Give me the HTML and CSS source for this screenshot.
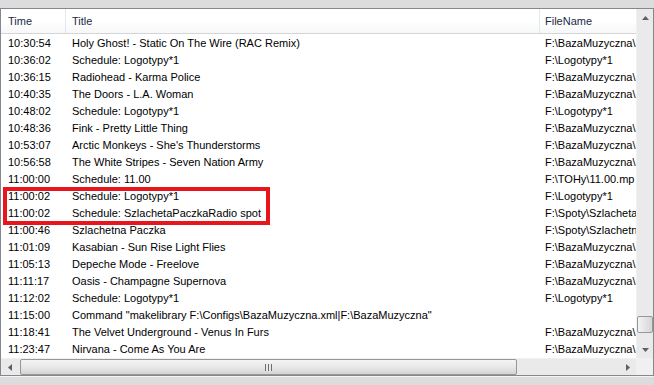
FILE: index.html
```html
<!DOCTYPE html>
<html lang="en">

<head>
    <meta charset="UTF-8">
    <title>Log</title>
    <link rel="stylesheet" href="styles.css">
</head>

<body>

    <div class="window">
        <div class="list">
            <div class="row head">
                <div class="cell">Time</div>
                <div class="cell">Title</div>
                <div class="cell">FileName</div>
            </div>

            <div class="row"><div class="cell">10:30:54</div><div class="cell">Holy Ghost! - Static On The Wire (RAC Remix)</div><div class="cell">F:\BazaMuzyczna\</div></div>
            <div class="row"><div class="cell">10:36:02</div><div class="cell">Schedule: Logotypy*1</div><div class="cell">F:\Logotypy*1</div></div>
            <div class="row"><div class="cell">10:36:15</div><div class="cell">Radiohead - Karma Police</div><div class="cell">F:\BazaMuzyczna\</div></div>
            <div class="row"><div class="cell">10:40:35</div><div class="cell">The Doors - L.A. Woman</div><div class="cell">F:\BazaMuzyczna\</div></div>
            <div class="row"><div class="cell">10:48:02</div><div class="cell">Schedule: Logotypy*1</div><div class="cell">F:\Logotypy*1</div></div>
            <div class="row"><div class="cell">10:48:36</div><div class="cell">Fink - Pretty Little Thing</div><div class="cell">F:\BazaMuzyczna\</div></div>
            <div class="row"><div class="cell">10:53:07</div><div class="cell">Arctic Monkeys - She's Thunderstorms</div><div class="cell">F:\BazaMuzyczna\</div></div>
            <div class="row"><div class="cell">10:56:58</div><div class="cell">The White Stripes - Seven Nation Army</div><div class="cell">F:\BazaMuzyczna\</div></div>
            <div class="row"><div class="cell">11:00:00</div><div class="cell">Schedule: 11.00</div><div class="cell">F:\TOHy\11.00.mp</div></div>
            <div class="row"><div class="cell">11:00:02</div><div class="cell">Schedule: Logotypy*1</div><div class="cell">F:\Logotypy*1</div></div>
            <div class="row"><div class="cell">11:00:02</div><div class="cell">Schedule: SzlachetaPaczkaRadio spot</div><div class="cell">F:\Spoty\Szlacheta</div></div>
            <div class="row"><div class="cell">11:00:46</div><div class="cell">Szlachetna Paczka</div><div class="cell">F:\Spoty\Szlachetna</div></div>
            <div class="row"><div class="cell">11:01:09</div><div class="cell">Kasabian - Sun Rise Light Flies</div><div class="cell">F:\BazaMuzyczna\</div></div>
            <div class="row"><div class="cell">11:05:13</div><div class="cell">Depeche Mode - Freelove</div><div class="cell">F:\BazaMuzyczna\</div></div>
            <div class="row"><div class="cell">11:11:17</div><div class="cell">Oasis - Champagne Supernova</div><div class="cell">F:\BazaMuzyczna\</div></div>
            <div class="row"><div class="cell">11:12:02</div><div class="cell">Schedule: Logotypy*1</div><div class="cell">F:\Logotypy*1</div></div>
            <div class="row"><div class="cell">11:15:00</div><div class="cell">Command "makelibrary F:\Configs\BazaMuzyczna.xml|F:\BazaMuzyczna"</div><div class="cell"></div></div>
            <div class="row"><div class="cell">11:18:41</div><div class="cell">The Velvet Underground - Venus In Furs</div><div class="cell">F:\BazaMuzyczna\</div></div>
            <div class="row"><div class="cell">11:23:47</div><div class="cell">Nirvana - Come As You Are</div><div class="cell">F:\BazaMuzyczna\</div></div>

            <!-- zaznaczenie -->
            <div class="mark"></div>
        </div>

        <div class="vscroll">
            <div class="arrow">
                <svg width="7" height="4" viewBox="0 0 7 4"><path d="M3.5 0 L7 4 L0 4 Z" fill="#5f5f5f"/></svg>
            </div>
            <div class="track vtrack">
                <div class="thumb vthumb"></div>
            </div>
            <div class="arrow">
                <svg width="7" height="4" viewBox="0 0 7 4"><path d="M0 0 L7 0 L3.5 4 Z" fill="#5f5f5f"/></svg>
            </div>
        </div>

        <div class="hscroll">
            <div class="arrow">
                <svg width="4" height="7" viewBox="0 0 4 7"><path d="M4 0 L4 7 L0 3.5 Z" fill="#5f5f5f"/></svg>
            </div>
            <div class="track htrack">
                <div class="thumb hthumb"><span class="grip"></span></div>
            </div>
            <div class="arrow">
                <svg width="4" height="7" viewBox="0 0 4 7"><path d="M0 0 L4 3.5 L0 7 Z" fill="#5f5f5f"/></svg>
            </div>
        </div>

        <div class="corner"></div>
    </div>

    <div class="status"></div>

</body>

</html>
```

FILE: styles.css
```css
* {
    margin: 0;
    padding: 0;
    box-sizing: border-box;
}

body {
    width: 654px;
    height: 385px;
    overflow: hidden;
    background: #dcdcdc;
    font-family: Tahoma, "Liberation Sans", sans-serif;
    font-size: 11px;
    color: #000;
    padding-top: 8px;
}

.window {
    height: 368px;
    border: 1px solid #828790;
    background: #fff;
    display: grid;
    grid-template-columns: 1fr 17px;
    grid-template-rows: 1fr 17px;
}

.list {
    position: relative;
    overflow: hidden;
}

.row {
    display: grid;
    grid-template-columns: 65px 474px 200px;
    height: 17px;
    align-items: center;
    white-space: nowrap;
}

.cell {
    overflow: hidden;
    padding-left: 6px;
}

.cell:first-child {
    padding-left: 7px;
}

.cell:last-child {
    padding-left: 5px;
}

.head {
    height: 25px;
    background: linear-gradient(#ffffff, #ffffff 50%, #f6f7f8);
    border-bottom: 1px solid #d5d5d5;
    color: #1b2a44;
}

.head .cell {
    height: 24px;
    line-height: 24px;
    border-right: 1px solid #e3e8ee;
}

.mark {
    position: absolute;
    left: 2px;
    top: 178px;
    width: 267px;
    height: 38px;
    border: 4px solid #e8151d;
}

/* paski przewijania */
.vscroll,
.hscroll {
    display: flex;
    background: #eaeaea;
}

.vscroll {
    flex-direction: column;
    border-left: 1px solid #f0f0f0;
}

.hscroll {
    border-top: 1px solid #f0f0f0;
}

.arrow {
    width: 17px;
    height: 17px;
    display: flex;
    justify-content: center;
    align-items: center;
    flex-shrink: 0;
}

.track {
    flex: 1;
    display: flex;
}

.vtrack {
    flex-direction: column;
    justify-content: flex-end;
}

.thumb {
    border: 1px solid #979797;
    border-radius: 2px;
    background: linear-gradient(90deg, #f4f4f4, #e4e4e4 50%, #d6d6d6);
}

.vthumb {
    height: 17px;
    margin-bottom: 8px;
}

.hthumb {
    width: 497px;
    margin-left: 2px;
    background: linear-gradient(#f4f4f4, #e8e8e8 50%, #d4d4d4);
    display: flex;
    justify-content: center;
    align-items: center;
}

.grip {
    width: 7px;
    height: 7px;
    background: repeating-linear-gradient(90deg, #6f6f6f 0 1px, #e8e8e8 1px 3px);
}

.corner {
    background: #f0f0f0;
}

.status {
    height: 9px;
    border-top: 1px solid #f4f4f4;
    background: #dcdcdc;
}
```
